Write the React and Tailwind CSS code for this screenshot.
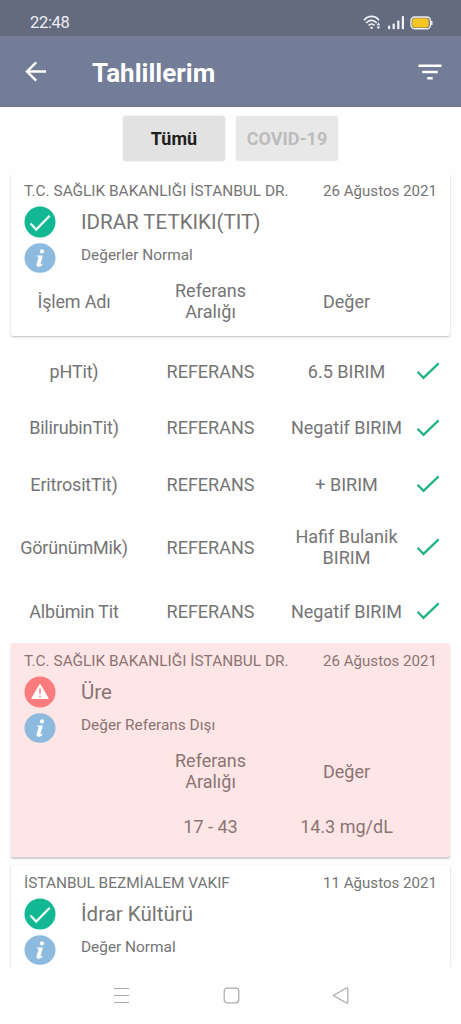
import React from 'react';

const results = [
  { name: 'pHTit)', value: '6.5 BIRIM', height: 'h-[56px]' },
  { name: 'BilirubinTit)', value: 'Negatif BIRIM', height: 'h-[57px]' },
  { name: 'EritrositTit)', value: '+ BIRIM', height: 'h-[56px]' },
  { name: 'GörünümMik)', value: 'Hafif Bulanik BIRIM', height: 'h-[70px]' },
  { name: 'Albümin Tit', value: 'Negatif BIRIM', height: 'h-[58px]' }
];

const OkIcon = () => (
  <svg viewBox="0 0 32 32" className="w-8 h-8 block">
    <circle cx="16" cy="16" r="15.5" fill="#12b893" />
    <path d="M6.5 17.5l5.7 6L25.7 9.8" fill="none" stroke="#effffb" strokeWidth="2.3" />
  </svg>
);

const WarnIcon = () => (
  <svg viewBox="0 0 32 32" className="w-8 h-8 block">
    <circle cx="16" cy="16" r="15.5" fill="#fc7c7e" />
    <path d="M16 8.3L24.3 22.5H7.7z" fill="#fff" stroke="#fff" strokeLinejoin="round" />
    <path d="M16 12.5v5.3M16 19.4v1.9" stroke="#f28c8e" strokeWidth="1.7" />
  </svg>
);

const InfoIcon = () => (
  <svg viewBox="0 0 32 32" className="w-8 h-8 block">
    <ellipse cx="16" cy="16" rx="15.5" ry="14.8" fill="#8dbbdf" />
    <circle cx="18" cy="9.4" r="2.1" fill="#fff" />
    <path d="M13 13.4h5.9l-2.4 8.5c-.2.9.5.7 1.8-.4l.5.7c-1.8 2-3.2 2.7-4.7 2.5-1.5-.2-1.9-1.3-1.4-2.9l1.7-6.1c.2-.8-.2-1.1-1.6-1.2z" fill="#fff" />
  </svg>
);

const Check = () => (
  <svg viewBox="0 0 24 18" className="w-6 h-[18px] block">
    <path d="M1.5 9.8l6 6L22.6 1.3" fill="none" stroke="#22b286" strokeWidth="2.3" />
  </svg>
);

// Top part shared by all of the result cards
const CardHeader = ({ hospital, date, title, note, warning }) => (
  <div className="pl-[13px] pr-[13px] pt-[8px]">
    <div className="flex justify-between text-[15.4px] leading-[20px] whitespace-nowrap">
      <span>{hospital}</span>
      <span className="text-[15.1px]">{date}</span>
    </div>
    <div className="flex mt-[5px]">
      <div className="w-[57px] flex flex-col gap-[4px]">
        {warning ? <WarnIcon /> : <OkIcon />}
        <InfoIcon />
      </div>
      <div>
        <h2 className="text-[20.5px] leading-[32px]">{title}</h2>
        <p className="text-[15.4px] leading-[20px] mt-[7px]">{note}</p>
      </div>
    </div>
  </div>
);

const Columns = ({ first, reference, value, check }) => (
  <div className="-ml-[6px] w-[439px] shrink-0 grid grid-cols-[137px_137px_135px_30px] items-center text-center text-[18px] leading-[21px]">
    <span className="pl-px tracking-[-0.01em]">{first}</span>
    <span>{reference}</span>
    <span className="px-[8px]">{value}</span>
    <span className="pl-[2px]">{check}</span>
  </div>
);

const ReferenceLabel = () => (
  <>
    Referans
    <br />
    Aralığı
  </>
);

export default function App() {
  return (
    <div className="w-[461px] h-[1024px] overflow-hidden flex flex-col bg-[#fefefe] text-[#757575] font-['Roboto',sans-serif]">
      {/* Status bar */}
      <div className="h-[36px] shrink-0 bg-[#646b7e] flex items-center justify-between pl-[30px] pr-[28px] pt-[9px]">
        <span className="text-[16.5px] leading-[20px] tracking-[-0.02em] text-[#eceef6]">22:48</span>
        <div className="flex items-center gap-[5.5px]">
          <svg viewBox="0 0 18 15" className="w-[18px] h-[15px]" fill="none" stroke="#f1f3fa" strokeWidth="1.7">
            <path d="M1 5.2c4.2-5 11-5 15 0M3.2 8c3-3.5 7.5-3.5 10.6 0M5.6 10.5c1.8-2 4.2-2 6 0" />
            <circle cx="8.6" cy="12.7" r="1.3" fill="#f1f3fa" stroke="none" />
            <path d="M13.6 10.3L15.4 7.6 17.2 10.3zM13.6 11.5h3.6L15.4 14.2z" fill="#f1f3fa" stroke="none" />
          </svg>
          <svg viewBox="0 0 18 15" className="w-[18px] h-[15px]" fill="#f1f3fa">
            <rect x="1" y="10.5" width="2.2" height="3.8" rx=".8" />
            <rect x="5.6" y="8.5" width="2.2" height="5.8" rx=".8" />
            <rect x="10.2" y="5.5" width="2.2" height="8.8" rx=".8" />
            <rect x="14.8" y="1" width="2.2" height="13.3" rx=".8" />
          </svg>
          <svg viewBox="0 0 23 14" className="w-[23px] h-[14px]">
            <rect x="1" y="1" width="19.5" height="11.8" rx="3.8" fill="#646b7e" stroke="#f1f1ee" strokeWidth="1.4" />
            <rect x="2.3" y="2.3" width="16.4" height="9.2" rx="2.5" fill="#f6c624" />
            <path d="M21.8 5v4" stroke="#f1f1ee" strokeWidth="1.4" />
          </svg>
        </div>
      </div>

      {/* App bar */}
      <header className="h-[71px] shrink-0 bg-[#747d97] border-b border-[#76758a] flex items-center pl-[25px] pr-[19px] text-white">
        <svg viewBox="0 0 22 22" className="w-[22px] h-[22px]" fill="none" stroke="currentColor" strokeWidth="2.4">
          <path d="M21 11.5H2.5M11.2 2.3L2 11.5l9.2 9.2" />
        </svg>
        <h1 className="ml-[45px] mt-[3px] text-[26px] leading-[30px] font-bold">Tahlillerim</h1>
        <svg viewBox="0 0 24 16" className="w-[24px] h-[16px] ml-auto mt-px" fill="none" stroke="currentColor" strokeWidth="2.6">
          <path d="M.5 1.8h23M4.3 8h15.4M9.3 14.3h5.4" />
        </svg>
      </header>

      {/* Filter buttons */}
      <div className="h-[65px] shrink-0 flex justify-center gap-[11px] pt-[9px]">
        <button className="w-[102px] h-[45px] rounded-[3px] bg-[#e2e2e2] shadow-[0_0_2px_#ddd] text-[#1e1e1e] text-[18px] font-bold">
          Tümü
        </button>
        <button className="w-[102px] h-[45px] rounded-[3px] bg-[#e8e8e8] shadow-[0_0_2px_#eee] text-[#bcbcbc] text-[18px] font-bold">
          COVID-19
        </button>
      </div>

      {/* Result list */}
      <main className="h-[795px] shrink-0 overflow-hidden px-[11px] pt-px">
        <section className="h-[163px] bg-white rounded-[2px] shadow-[0_1px_2px_rgba(0,0,0,0.26)]">
          <CardHeader
            hospital="T.C. SAĞLIK BAKANLIĞI İSTANBUL DR."
            date="26 Ağustos 2021"
            title="IDRAR TETKIKI(TIT)"
            note="Değerler Normal"
          />
          <div className="mt-[6px]">
            <Columns first="İşlem Adı" reference={<ReferenceLabel />} value="Değer" />
          </div>
        </section>

        <div className="pt-[7px]">
          {results.map((row) => (
            <div key={row.name} className={`flex items-center ${row.height}`}>
              <Columns first={row.name} reference="REFERANS" value={row.value} check={<Check />} />
            </div>
          ))}
        </div>

        <section className="mt-[3px] h-[214px] bg-[#ffe6e6] text-[#8a7474] rounded-[2px] shadow-[0_2px_2px_rgba(0,0,0,0.2)]">
          <CardHeader
            hospital="T.C. SAĞLIK BAKANLIĞI İSTANBUL DR."
            date="26 Ağustos 2021"
            title="Üre"
            note="Değer Referans Dışı"
            warning
          />
          <div className="mt-[6px]">
            <Columns reference={<ReferenceLabel />} value="Değer" />
          </div>
          <div className="mt-[24px]">
            <Columns reference="17 - 43" value="14.3 mg/dL" />
          </div>
        </section>

        <section className="mt-[8px] h-[163px] bg-white shadow-[0_1px_2px_rgba(0,0,0,0.22)]">
          <CardHeader
            hospital="İSTANBUL BEZMİALEM VAKIF"
            date="11 Ağustos 2021"
            title="İdrar Kültürü"
            note="Değer Normal"
          />
        </section>
      </main>

      {/* Navigation bar */}
      <nav className="h-[57px] shrink-0 bg-[#fefefe] flex items-center justify-center gap-[93px]">
        <svg viewBox="0 0 17 17" className="w-[17px] h-[17px]" stroke="#a9a9a9" strokeWidth="1.2">
          <path d="M1 1.5h15M1 8.5h15M1 15.5h15" />
        </svg>
        <svg viewBox="0 0 17 17" className="w-[17px] h-[17px]" fill="none" stroke="#a9a9a9" strokeWidth="1.2">
          <rect x="1.2" y="1.2" width="14.6" height="14.6" rx="3" />
        </svg>
        <svg viewBox="0 0 17 17" className="w-[17px] h-[17px] -ml-px" fill="none" stroke="#a9a9a9" strokeWidth="1.2">
          <path d="M1.3 8.5L14.4 1Q15.8.5 15.8 2v13q0 1.5-1.4 1z" strokeLinejoin="round" />
        </svg>
      </nav>
    </div>
  );
}
